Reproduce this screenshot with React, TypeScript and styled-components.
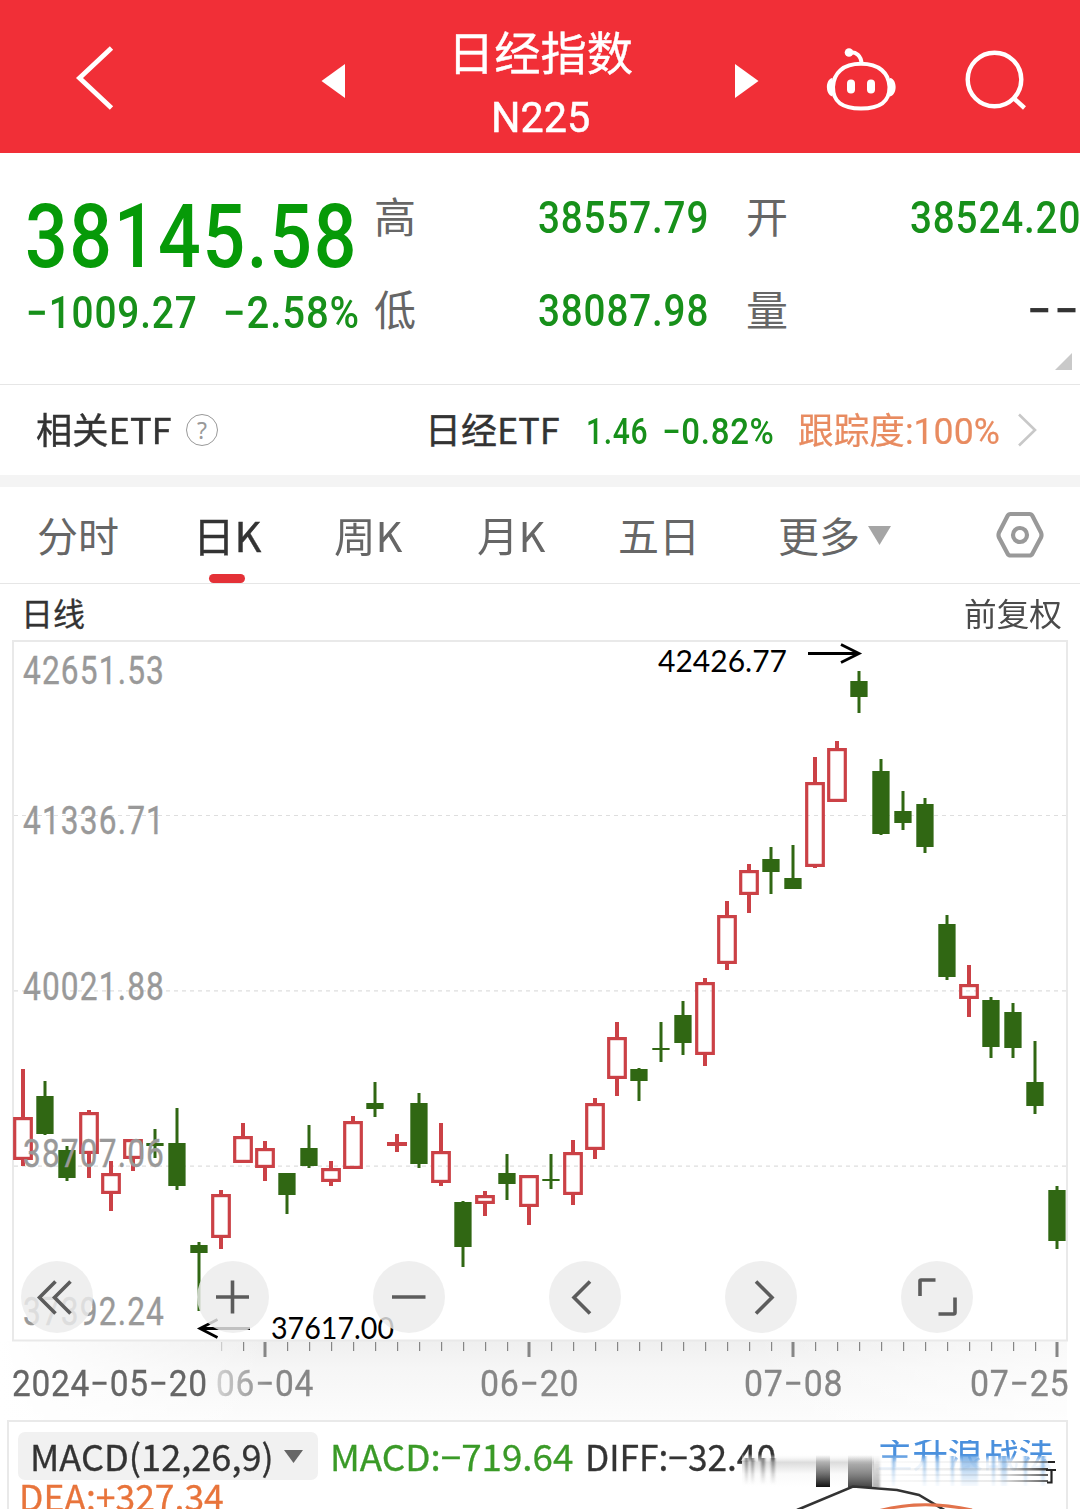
import React, { useLayoutEffect, useRef, useState } from "react";
import styled, { createGlobalStyle } from "styled-components";

const Global = createGlobalStyle`
  * { box-sizing: border-box; }
  body { margin: 0; background: #fff; }
`;

const CJK = `"Noto Sans CJK SC", "Noto Sans", sans-serif`;
const NUM = `Roboto, "Noto Sans CJK SC", sans-serif`;

/* ---------- condensed text: squeezes its glyphs to a given width ---------- */
const Slot = styled.span<{ $w: number; $size: number; $weight: number; $color: string; $cjk?: boolean; $ml: number; $dy: number; $bold: number; $track: number }>`
  display: block;
  flex: none;
  width: ${(p) => p.$w}px;
  height: ${(p) => p.$size}px;
  margin-left: ${(p) => p.$ml}px;
  margin-top: ${(p) => p.$dy}px;
  font: ${(p) => p.$weight} ${(p) => p.$size}px/${(p) => p.$size}px ${(p) => (p.$cjk ? CJK : NUM)};
  letter-spacing: ${(p) => p.$track}px;
  color: ${(p) => p.$color};
  -webkit-text-stroke: ${(p) => p.$bold}px ${(p) => p.$color};
  white-space: nowrap;
`;
const Glyphs = styled.span`
  display: inline-block;
  transform-origin: 0 50%;
`;

type FitProps = {
  w: number; size: number; weight?: number; color: string; cjk?: boolean;
  ml?: number; dy?: number; bold?: number; track?: number; children: string;
};
function Fit({ w, size, weight = 400, color, cjk, ml = 0, dy = 0, bold = 0, track, children }: FitProps) {
  const ref = useRef<HTMLSpanElement>(null);
  const [k, setK] = useState(1);
  const gap = track ?? (cjk ? 0 : size * 0.022);
  useLayoutEffect(() => {
    if (ref.current) setK(w / (ref.current.offsetWidth - gap));
  }, [w, gap, children]);
  return (
    <Slot $w={w} $size={size} $weight={weight} $color={color} $cjk={cjk} $ml={ml} $dy={dy} $bold={bold} $track={gap}>
      <Glyphs ref={ref} style={{ transform: `scaleX(${k})` }}>{children}</Glyphs>
    </Slot>
  );
}

/* ---------- layout ---------- */
const Page = styled.main`
  width: 1080px;
  height: 1509px;
  overflow: hidden;
  display: flex;
  flex-direction: column;
  background: #fff;
`;
const Header = styled.header`
  height: 153px;
  flex: none;
  display: grid;
  grid-template-columns: 320px 27px 387px 26px 66px 70px 66px 66px;
  align-items: start;
  background: #f12f37;
`;
const HeaderIcon = styled.svg<{ $w: number; $h: number; $top: number; $left?: number }>`
  display: block;
  width: ${(p) => p.$w}px;
  height: ${(p) => p.$h}px;
  margin: ${(p) => p.$top}px 0 0 ${(p) => p.$left ?? 0}px;
`;
const Titles = styled.div`
  display: flex;
  flex-direction: column;
  padding: 27px 0 0 101px;
`;
const Quote = styled.section`
  height: 232px;
  flex: none;
  display: grid;
  grid-template-columns: 374px 372px 334px;
  border-bottom: 1px solid #e6e6e6;
`;
const QuoteCol = styled.div<{ $top: number }>`
  display: flex;
  flex-direction: column;
  padding-top: ${(p) => p.$top}px;
`;
const QuoteRow = styled.div<{ $h: number }>`
  display: flex;
  align-items: flex-start;
  height: ${(p) => p.$h}px;
`;
const Corner = styled.i`
  align-self: flex-end;
  width: 17px;
  height: 17px;
  margin: -10px 8px 0 0;
  background: #c9c9c9;
  clip-path: polygon(100% 0, 100% 100%, 0 100%);
`;
const EtfRow = styled.section`
  height: 90px;
  flex: none;
  display: flex;
  align-items: center;
`;
const Help = styled.span`
  width: 32px;
  height: 32px;
  margin: 0 209px 0 14px;
  border: 1.5px solid #999;
  border-radius: 50%;
  font: 400 23px/30px "Noto Sans", sans-serif;
  text-align: center;
  color: #999;
`;
const Chevron = styled.svg`
  width: 22px;
  height: 36px;
  margin: 0 0 1px 17px;
`;
const Band = styled.div`
  height: 12px;
  flex: none;
  background: #f4f4f4;
`;
const Tabs = styled.nav`
  height: 97px;
  flex: none;
  display: flex;
  align-items: stretch;
  border-bottom: 1px solid #e6e6e6;
`;
const Tab = styled.div<{ $left: number }>`
  display: flex;
  flex-direction: column;
  align-items: center;
  justify-content: space-between;
  margin-left: ${(p) => p.$left}px;
  padding-top: 27px;
`;
const Mark = styled.i`
  width: 36px;
  height: 9px;
  margin-right: 2px;
  border-radius: 4.5px;
  background: #e43137;
`;
const Caret = styled.i<{ $w: number; $h: number; $color: string; $m: string }>`
  flex: none;
  width: ${(p) => p.$w}px;
  height: ${(p) => p.$h}px;
  margin: ${(p) => p.$m};
  background: ${(p) => p.$color};
  clip-path: polygon(0 0, 100% 0, 50% 100%);
`;
const Gear = styled.svg`
  width: 50px;
  height: 48px;
  margin: 24px 0 0 104px;
`;
const ChartHead = styled.div`
  height: 56px;
  flex: none;
  display: flex;
  justify-content: space-between;
  padding: 14px 18px 0 21px;
`;
const ChartBox = styled.section`
  position: relative;
  height: 701px;
  flex: none;
`;
const Canvas = styled.svg`
  display: block;
  overflow: visible;
`;
const Controls = styled.div`
  position: absolute;
  left: 21px;
  top: 621px;
  display: flex;
  gap: 104px;
`;
const Round = styled.button`
  width: 72px;
  height: 72px;
  padding: 0;
  border: 0;
  border-radius: 50%;
  background: rgba(235, 235, 235, 0.82);
`;
const Axis = styled.section`
  height: 79px;
  flex: none;
  margin-right: 13px;
  background: linear-gradient(90deg, #fff 0, rgba(255, 255, 255, 0) 25%, rgba(255,255,255,0) 70%, rgba(255,255,255,.6) 100%),
    linear-gradient(#efefef, #f6f6f6 35%, #fcfcfc);
`;
const Ticks = styled.svg`
  display: block;
`;
const Dates = styled.div`
  display: flex;
  padding: 7px 0 0 12px;
`;
const Faded = styled.div`
  -webkit-mask-image: linear-gradient(90deg, rgba(0, 0, 0, 0.35) 10%, #000 60%);
  mask-image: linear-gradient(90deg, rgba(0, 0, 0, 0.35) 10%, #000 60%);
`;
const Macd = styled.section`
  position: relative;
  flex: 1;
  margin: 0 12px 0 7px;
  border: 2px solid #e9e9e9;
  border-bottom: 0;
`;
const MacdRow = styled.div`
  display: flex;
  align-items: flex-start;
  padding: 10px 0 0 9px;
`;
const Picker = styled.div`
  width: 300px;
  height: 48px;
  flex: none;
  display: flex;
  align-items: flex-start;
  border-radius: 7px;
  background: #f1f1f1;
`;
const Strategy = styled.div`
  height: 36px;
  margin: 8px 0 0 101px;
  overflow: hidden;
  -webkit-mask-image: linear-gradient(#000 42%, rgba(0, 0, 0, 0.1) 62%);
  mask-image: linear-gradient(#000 42%, rgba(0, 0, 0, 0.1) 62%);
`;
const Overlay = styled.svg`
  position: absolute;
  left: 724px;
  top: 15px;
`;

/* ---------- data: [up, high, low, bodyTop, bodyBottom] ---------- */
const candles: [number, number, number, number, number][] = [
  [1, 1069, 1166, 1117, 1160], [0, 1081, 1135, 1096, 1134], [0, 1146, 1181, 1150, 1178], [1, 1110, 1178, 1112, 1154],
  [1, 1161, 1211, 1173, 1194], [1, 1139, 1171, 1139, 1159], [0, 1129, 1158, 1143, 1146], [0, 1108, 1190, 1143, 1186],
  [0, 1242, 1311, 1245, 1253], [1, 1190, 1249, 1194, 1238], [1, 1123, 1163, 1136, 1163], [1, 1141, 1181, 1148, 1168],
  [0, 1173, 1214, 1173, 1195], [0, 1125, 1168, 1148, 1166], [1, 1161, 1186, 1168, 1182], [1, 1116, 1169, 1121, 1169],
  [0, 1082, 1117, 1103, 1109], [1, 1134, 1152, 1142, 1146], [0, 1093, 1168, 1103, 1164], [1, 1123, 1186, 1151, 1183],
  [0, 1201, 1267, 1202, 1247], [1, 1191, 1216, 1195, 1204], [0, 1154, 1200, 1173, 1184], [1, 1175, 1225, 1175, 1207],
  [0, 1154, 1189, 1179, 1181], [1, 1140, 1205, 1152, 1195], [1, 1098, 1159, 1103, 1150], [1, 1022, 1096, 1037, 1079],
  [0, 1068, 1101, 1069, 1081], [0, 1022, 1062, 1048, 1050], [0, 1001, 1055, 1015, 1043], [1, 978, 1066, 982, 1055],
  [1, 901, 970, 915, 964], [1, 864, 913, 870, 895], [0, 847, 894, 859, 872], [0, 845, 889, 878, 889],
  [1, 757, 868, 782, 867], [1, 741, 802, 748, 802], [0, 671, 713, 681, 697], [0, 759, 835, 771, 834],
  [0, 791, 830, 811, 823], [0, 798, 853, 804, 847], [0, 915, 980, 924, 977], [1, 965, 1017, 984, 999],
  [0, 997, 1058, 1000, 1047], [0, 1003, 1058, 1012, 1048], [0, 1041, 1114, 1082, 1106], [0, 1186, 1249, 1190, 1241],
];
const RED = "#cb4146";
const GREEN = "#306713";

function Candle({ i }: { i: number }) {
  const [up, hi, lo, top, bot] = candles[i];
  const x = 23 + i * 22;
  if (!up)
    return (
      <g fill={GREEN}>
        <rect x={x - 1.5} y={hi} width={3} height={lo - hi} />
        <rect x={x - 8.7} y={top} width={17.3} height={bot - top} />
      </g>
    );
  const flat = bot - top < 6;
  return (
    <g fill={RED}>
      <rect x={x - 2} y={hi} width={4} height={Math.max(0, top - hi + 1)} />
      <rect x={x - 2} y={bot - 1} width={4} height={Math.max(0, lo - bot + 1)} />
      {flat ? (
        <rect x={x - 10} y={top} width={20} height={bot - top} />
      ) : (
        <rect x={x - 8.3} y={top + 1.6} width={16.6} height={bot - top - 3.2} fill="none" stroke={RED} strokeWidth={3.2} />
      )}
    </g>
  );
}

const levels: [string, number][] = [["42651.53", 684], ["41336.71", 834], ["40021.88", 1000], ["38707.06", 1167], ["37392.24", 1325]];

const controls = [
  "M34.5 20.5 18.5 36.5 34.5 52.5M49.5 20.5 33.5 36.5 49.5 52.5",
  "M19 36H52M35.5 19.5V52.5",
  "M19 36H52.5",
  "M41 20.5 25 36.5 41 52.5",
  "M31 20.5 47 36.5 31 52.5",
  "M19 35V20q0-1 1-1H34.5M54 36.5V51.5q0 1.5-1.5 1.5H37.5",
];

const trails: [number, number][] = [[892, 3], [923, 3], [936, 3], [951, 3], [961, 17], [992, 3], [1001, 6], [1024, 3], [1041, 4]];

export default function App() {
  return (
    <Page>
      <Global />
      <Header>
        <HeaderIcon $w={50} $h={72} $top={42} $left={70} viewBox="70 42 50 72">
          <path d="M111.5 48 79.5 78 111.5 108" fill="none" stroke="#fff" strokeWidth="4.8" />
        </HeaderIcon>
        <HeaderIcon $w={27} $h={36} $top={63} viewBox="320 63 27 36">
          <path d="M345 64V98L321.5 81Z" fill="#fff" />
        </HeaderIcon>
        <Titles>
          <Fit cjk w={185} size={46} bold={0.4} color="#fff">日经指数</Fit>
          <Fit w={99} size={43} bold={0.5} color="#fff" ml={43} dy={23} track={0}>N225</Fit>
        </Titles>
        <HeaderIcon $w={26} $h={36} $top={63} viewBox="734 63 26 36">
          <path d="M735 64V98L758.5 81Z" fill="#fff" />
        </HeaderIcon>
        <i />
        <HeaderIcon $w={72} $h={68} $top={46} $left={-1} viewBox="825 46 72 68">
          <g fill="none" stroke="#fff" strokeWidth="4">
            <path d="M849 52.5C856 51 861.5 56 861.5 64" />
            <path d="M861 63.8C843 63.8 833.5 73 833 87C833 102 842 108.5 861 108.5S889.5 102 889.5 87C889 73 879 63.8 861 63.8Z" />
          </g>
          <g fill="#fff">
            <circle cx="849" cy="52.5" r="4.3" />
            <path d="M832.5 78C825 79 825 95 832.5 96.5ZM890 78C897.5 79 897.5 95 890 96.5Z" />
            <rect x="847" y="79.5" width="8" height="14" rx="4" />
            <rect x="867" y="79.5" width="8" height="14" rx="4" />
          </g>
        </HeaderIcon>
        <i />
        <HeaderIcon $w={66} $h={66} $top={48} viewBox="962 48 66 66">
          <g fill="none" stroke="#fff" strokeWidth="4.4">
            <circle cx="994.5" cy="79.5" r="26.8" />
            <path d="M1013.5 98 1024.5 108" />
          </g>
        </HeaderIcon>
      </Header>

      <Quote>
        <QuoteCol $top={39}>
          <QuoteRow $h={99}>
            <Fit w={331} size={89} weight={500} color="#069a08" ml={25}>38145.58</Fit>
          </QuoteRow>
          <QuoteRow $h={50}>
            <Fit w={171} size={44} weight={500} color="#17901a" ml={26}>−1009.27</Fit>
            <Fit w={136} size={44} weight={500} color="#17901a" ml={26}>−2.58%</Fit>
          </QuoteRow>
        </QuoteCol>
        <QuoteCol $top={42}>
          <QuoteRow $h={93}>
            <Fit cjk w={42} size={42} color="#666" dy={-1}>高</Fit>
            <Fit w={170} size={45} weight={500} color="#17901a" ml={122}>38557.79</Fit>
          </QuoteRow>
          <QuoteRow $h={50}>
            <Fit cjk w={42} size={42} color="#666" dy={-1}>低</Fit>
            <Fit w={170} size={45} weight={500} color="#17901a" ml={122}>38087.98</Fit>
          </QuoteRow>
        </QuoteCol>
        <QuoteCol $top={42}>
          <QuoteRow $h={93}>
            <Fit cjk w={42} size={42} color="#666" dy={-1}>开</Fit>
            <Fit w={170} size={45} weight={500} color="#17901a" ml={122}>38524.20</Fit>
          </QuoteRow>
          <QuoteRow $h={75}>
            <Fit cjk w={42} size={42} color="#666" dy={-1}>量</Fit>
            <Fit w={52} size={45} weight={500} color="#333" ml={239} track={3}>−−</Fit>
          </QuoteRow>
          <Corner />
        </QuoteCol>
      </Quote>

      <EtfRow>
        <Fit cjk w={136} size={36} bold={0.4} color="#333" ml={36} dy={-4}>相关ETF</Fit>
        <Help>?</Help>
        <Fit cjk w={135} size={36} bold={0.4} color="#333" ml={-2} dy={-4}>日经ETF</Fit>
        <Fit w={62} size={36} weight={500} color="#17901a" ml={26} dy={3}>1.46</Fit>
        <Fit w={112} size={36} weight={500} color="#17901a" ml={14} dy={3}>−0.82%</Fit>
        <Fit w={202} size={36} bold={0.2} color="#e88b60" ml={24} dy={4} track={0}>跟踪度:100%</Fit>
        <Chevron viewBox="0 0 22 36">
          <path d="M2 2.5 18 18 2 33.5" fill="none" stroke="#c8c8c8" strokeWidth="2.6" />
        </Chevron>
      </EtfRow>
      <Band />

      <Tabs>
        <Tab $left={37}><Fit cjk w={82} size={41} color="#666">分时</Fit></Tab>
        <Tab $left={74}><Fit cjk w={69} size={41} bold={0.4} color="#333">日K</Fit><Mark /></Tab>
        <Tab $left={72}><Fit cjk w={69} size={41} color="#666">周K</Fit></Tab>
        <Tab $left={74}><Fit cjk w={69} size={41} color="#666">月K</Fit></Tab>
        <Tab $left={72}><Fit cjk w={82} size={41} color="#666">五日</Fit></Tab>
        <Tab $left={78}><Fit cjk w={82} size={41} color="#666">更多</Fit></Tab>
        <Caret $w={23} $h={19} $color="#a5a5a5" $m="39px 0 0 8px" />
        <Gear viewBox="995 511 50 48">
          <g fill="none" stroke="#999" strokeWidth="4.2" strokeLinejoin="round">
            <path d="M1010.5 514H1029.5Q1031.5 514 1032.5 516L1041 532.5Q1042 535 1041 537.5L1032.5 553.5Q1031.5 555.5 1029.5 555.5H1010.5Q1008.5 555.5 1007.5 553.5L999 537.5Q998 535 999 532.5L1007.5 516Q1008.5 514 1010.5 514Z" />
            <circle cx="1020" cy="535" r="7" />
          </g>
        </Gear>
      </Tabs>

      <ChartHead>
        <Fit cjk w={64} size={32} bold={0.3} color="#333" dy={-2}>日线</Fit>
        <Fit cjk w={98} size={32} color="#4a4a4a" dy={-2}>前复权</Fit>
      </ChartHead>

      <ChartBox>
        <Canvas width="1080" height="701" viewBox="0 640 1080 701">
          <rect x="13" y="641" width="1054" height="699.5" fill="none" stroke="#e9e9e9" strokeWidth="2" />
          <g stroke="#dedede" strokeWidth="1.2" strokeDasharray="4 4">
            <path d="M14 815.5H1066M14 990.8H1066M14 1166.2H1066" />
          </g>
          {candles.map((_, i) => <Candle key={i} i={i} />)}
          <g fill="#999" fontFamily={NUM} fontSize="38" fontWeight="400" letterSpacing="1.4" stroke="#999" strokeWidth=".4">
            {levels.map(([t, y]) => (
              <text key={t} x="23" y={y} textLength="142" lengthAdjust="spacingAndGlyphs">{t}</text>
            ))}
          </g>
          <g fill="#000" fontFamily='Lato, "Noto Sans", sans-serif' fontSize="31">
            <text x="658" y="672" textLength="129" lengthAdjust="spacingAndGlyphs">42426.77</text>
            <text x="271" y="1339" textLength="123" lengthAdjust="spacingAndGlyphs">37617.00</text>
          </g>
          <g fill="none" stroke="#000" strokeWidth="2.8">
            <path d="M808 653.5H859M841 644.5 859 653.5 841 662.5" />
            <path d="M250 1328.5H200M217.5 1319.5 200 1328.5 217.5 1337.5" />
          </g>
        </Canvas>
        <Controls>
          {controls.map((d) => (
            <Round key={d}>
              <Canvas width="72" height="72" viewBox="0 0 72 72">
                <path d={d} fill="none" stroke="#5c5c5c" strokeWidth="3.6" />
              </Canvas>
            </Round>
          ))}
        </Controls>
      </ChartBox>

      <Axis>
        <Ticks width="1067" height="18" viewBox="0 1341 1067 18">
          {Array.from({ length: 39 }, (_, k) => {
            const x = 221 + k * 22;
            const major = (x - 265) % 264 === 0;
            return (
              <rect key={k} x={major ? x - 1.5 : x} y={1342} width={major ? 3 : 1.2} height={major ? 15 : 9}
                fill={x < 230 ? "#ccc" : "#868686"} />
            );
          })}
        </Ticks>
        <Dates>
          <Fit w={195} size={36} bold={0.3} color="#666">2024−05−20</Fit>
          <Faded><Fit w={97} size={36} bold={0.3} color="#868686" ml={9}>06−04</Fit></Faded>
          <Fit w={98} size={36} bold={0.3} color="#868686" ml={167}>06−20</Fit>
          <Fit w={98} size={36} bold={0.3} color="#868686" ml={166}>07−08</Fit>
          <Fit w={98} size={36} bold={0.3} color="#868686" ml={128}>07−25</Fit>
        </Dates>
      </Axis>

      <Macd>
        <MacdRow>
          <Picker>
            <Fit w={244} size={36} bold={0.3} color="#333" ml={12} dy={5} cjk>MACD(12,26,9)</Fit>
            <Caret $w={19} $h={13} $color="#666" $m="18px 0 0 10px" />
          </Picker>
          <Fit w={243} size={36} bold={0.3} color="#3a9a27" ml={12} dy={5} cjk>MACD:−719.64</Fit>
          <Fit w={191} size={36} bold={0.3} color="#333" ml={12} dy={5} cjk>DIFF:−32.40</Fit>
          <Strategy><Fit cjk w={177} size={36} color="#4a90dd" bold={0.2} dy={-6}>主升浪战法</Fit></Strategy>
        </MacdRow>
        <Fit w={205} size={36} bold={0.3} color="#e8743b" ml={10} dy={-3} cjk>DEA:+327.34</Fit>
        <Overlay width="344" height="73" viewBox="733 1437 344 73">
          <defs>
            <linearGradient id="veil" x1="0" y1="0" x2="0" y2="1">
              <stop offset="0" stopColor="#fff" stopOpacity="0" />
              <stop offset=".25" stopColor="#dcdcdc" />
              <stop offset=".6" stopColor="#fafafa" />
              <stop offset="1" stopColor="#fff" />
            </linearGradient>
            <linearGradient id="ink" x1="0" y1="0" x2="0" y2="1">
              <stop offset="0" stopColor="#888" stopOpacity="0" />
              <stop offset=".35" stopColor="#888" stopOpacity=".8" />
              <stop offset="1" stopColor="#111" />
            </linearGradient>
            <linearGradient id="soft" x1="0" y1="0" x2="0" y2="1">
              <stop offset="0" stopColor="#aaa" stopOpacity="0" />
              <stop offset=".3" stopColor="#999" stopOpacity=".8" />
              <stop offset="1" stopColor="#444" />
            </linearGradient>
            <linearGradient id="trail" x1="0" y1="0" x2="0" y2="1">
              <stop offset="0" stopColor="#444" stopOpacity=".7" />
              <stop offset="1" stopColor="#999" stopOpacity="0" />
            </linearGradient>
            <linearGradient id="blue" x1="0" y1="0" x2="0" y2="1">
              <stop offset="0" stopColor="#5f9fe0" stopOpacity=".8" />
              <stop offset="1" stopColor="#9cc6ee" stopOpacity=".1" />
            </linearGradient>
            <linearGradient id="streak" x1="0" y1="0" x2="1" y2="0">
              <stop offset="0" stopColor="#888" stopOpacity=".05" />
              <stop offset=".7" stopColor="#777" stopOpacity=".2" />
              <stop offset="1" stopColor="#333" />
            </linearGradient>
            <filter id="smear" x="-20%" y="-20%" width="140%" height="140%">
              <feGaussianBlur stdDeviation="1.2 0.6" />
            </filter>
          </defs>
          <rect x="742" y="1454" width="132" height="33" fill="url(#veil)" />
          <g filter="url(#smear)">
            <g fill="url(#trail)">
              <rect x="745" y="1458" width="3" height="27" />
              <rect x="751" y="1458" width="3" height="27" />
              <rect x="761" y="1458" width="4" height="27" />
              <rect x="771" y="1458" width="4" height="27" />
            </g>
            <g fill="url(#blue)">
              {trails.map(([x, w]) => <rect key={x} x={x} y="1456" width={w} height="30" />)}
            </g>
            <rect x="872" y="1455" width="8" height="32" fill="url(#soft)" opacity=".4" />
          </g>
          <rect x="816" y="1455" width="14" height="32" fill="url(#ink)" />
          <rect x="848" y="1455" width="24" height="32" fill="url(#soft)" />
          <g fill="url(#streak)">
            <rect x="876" y="1461" width="172" height="2" opacity=".6" />
            <rect x="876" y="1468" width="172" height="2.5" />
            <rect x="876" y="1474" width="172" height="2" opacity=".8" />
            <rect x="876" y="1480" width="172" height="2" opacity=".8" />
          </g>
          <path d="M1048 1462H1055M1046 1470H1056M1051.5 1470V1482.5H1047" fill="none" stroke="#222" strokeWidth="2.2" />
          <path d="M797 1510 853 1486.5 897 1490 919 1495 946 1511" fill="none" stroke="#333" strokeWidth="2.6" />
          <path d="M878 1511Q922 1499 972 1510" fill="none" stroke="#e2734c" strokeWidth="3" />
        </Overlay>
      </Macd>
    </Page>
  );
}
